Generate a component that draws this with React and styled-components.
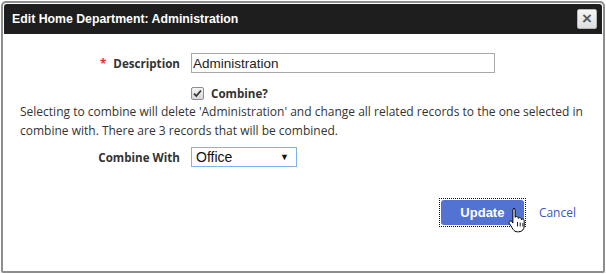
import React, { useState } from 'react';
import styled, { createGlobalStyle } from 'styled-components';

const GlobalStyle = createGlobalStyle`
  html, body {
    margin: 0;
    padding: 0;
    background: #fff;
  }
  body {
    font-family: "Open Sans", "Noto Sans", sans-serif;
  }
`;

// --- Styled Components ---
const Page = styled.div`
  width: 606px;
  height: 274px;
  padding: 1px;
  box-sizing: border-box;
`;
const Dialog = styled.div`
  height: 272px;
  box-sizing: border-box;
  border: 2px solid #8d8d8d;
  border-radius: 5px 5px 2px 2px;
  padding: 1px;
  background: #fff;
  display: flex;
  flex-direction: column;
`;
const TitleBar = styled.div`
  height: 30px;
  background: #1e1e1e;
  border-radius: 3px 3px 0 0;
  display: flex;
  align-items: center;
  justify-content: space-between;
  padding: 0 5px 0 8px;
`;
const Title = styled.h1`
  margin: 0;
  font-family: "Liberation Sans", Arial, sans-serif;
  font-size: 12.3px;
  font-weight: 700;
  color: #fff;
`;
const CloseButton = styled.button`
  width: 20px;
  height: 20px;
  padding: 0;
  border: 1px solid #b5b5b5;
  border-radius: 2px;
  background: linear-gradient(#f6f6f6, #dedede);
  color: #5a5a5a;
  font-family: "Liberation Sans", Arial, sans-serif;
  font-size: 17px;
  font-weight: 700;
  line-height: 16px;
  display: flex;
  align-items: center;
  justify-content: center;
`;
const Body = styled.div`
  flex: 1;
  padding: 19px 0 0 0;
  display: flex;
  flex-direction: column;
  color: #333;
`;
const FormRow = styled.div`
  display: grid;
  grid-template-columns: 176px 1fr;
  column-gap: 11px;
  align-items: center;
  margin-bottom: ${p => p.gap || 0}px;
`;
const Label = styled.label`
  text-align: right;
  font-size: 11.6px;
  font-weight: 700;
  color: #333;
`;
const Required = styled.span`
  color: #d9342b;
  margin-right: 7px;
`;
const TextInput = styled.input`
  width: 304px;
  height: 20px;
  box-sizing: border-box;
  border: 1px solid #a9a9a9;
  padding: 0 1px;
  font-family: "Liberation Sans", Arial, sans-serif;
  font-size: 13.5px;
  color: #222;
  outline: none;
`;
const CheckWrap = styled.label`
  display: flex;
  align-items: center;
  gap: 7px;
  font-size: 11.6px;
  font-weight: 700;
`;
const CheckBox = styled.span`
  width: 11px;
  height: 11px;
  border: 1px solid #8f8f8f;
  border-radius: 2px;
  background: linear-gradient(#f4f4f4, #d8d8d8);
  display: flex;
  align-items: center;
  justify-content: center;
`;
const Note = styled.p`
  margin: 1px 0 7px 0;
  padding: 0 10px 0 16px;
  font-size: 12px;
  line-height: 19px;
  color: #333;
`;
const Select = styled.div`
  width: 106px;
  height: 20px;
  box-sizing: border-box;
  border: 1px solid #7eb4ea;
  display: flex;
  align-items: center;
  justify-content: space-between;
  padding: 0 7px 0 4px;
  font-family: "Liberation Sans", Arial, sans-serif;
  font-size: 14px;
  color: #111;
  background: #fff;
`;
const Arrow = styled.span`
  font-size: 9px;
  color: #111;
`;
const Actions = styled.div`
  display: flex;
  justify-content: flex-end;
  align-items: center;
  gap: 13px;
  padding: 31px 26px 0 0;
`;
const ButtonFocus = styled.div`
  position: relative;
  border: 1px dotted #111;
  padding: 1px;
  display: flex;
`;
const PrimaryButton = styled.button`
  width: 83px;
  height: 25px;
  border: none;
  border-radius: 3px;
  background: #5373d3;
  color: #fff;
  font-family: "Liberation Sans", Arial, sans-serif;
  font-size: 13px;
  font-weight: 700;
  padding: 0;
`;
const Cursor = styled.svg`
  position: absolute;
  left: 68px;
  top: 8px;
  pointer-events: none;
`;
const CancelLink = styled.a`
  font-size: 12px;
  color: #3b55c4;
  text-decoration: none;
  cursor: pointer;
`;

const HandCursor = () => (
  <Cursor width="20" height="26" viewBox="0 0 20 26">
    <path
      d="M5.5 1.5c1 0 1.6.7 1.6 1.6v7.2c.3-.5.9-.8 1.5-.8 1 0 1.6.7 1.6 1.6v.3c.3-.5.9-.8 1.5-.8 1 0 1.6.7 1.6 1.6v.5c.3-.4.8-.6 1.3-.6 1 0 1.6.7 1.6 1.6v5.3c0 3.4-2.2 5.8-5.6 5.8H9.4c-2 0-3.2-.9-4.3-2.4L1.4 16.6c-.6-.9-.4-1.8.3-2.3.8-.5 1.7-.3 2.3.5l.9 1.3V3.1c0-.9.6-1.6 1.6-1.6z"
      fill="#fff"
      stroke="#000"
      strokeWidth="1"
      strokeLinejoin="round"
    />
    <path d="M9.5 15v4.5M12.2 15.5v4M14.9 16v3.5" stroke="#000" strokeWidth="0.9" />
  </Cursor>
);

const App = () => {
  const [description, setDescription] = useState('Administration');

  return (
    <Page>
      <GlobalStyle />
      <Dialog>
        <TitleBar>
          <Title>Edit Home Department: Administration</Title>
          <CloseButton aria-label="close">×</CloseButton>
        </TitleBar>
        <Body>
          <FormRow gap={13}>
            <Label>
              <Required>*</Required>Description
            </Label>
            <TextInput value={description} onChange={e => setDescription(e.target.value)} />
          </FormRow>

          <FormRow>
            <span />
            <CheckWrap>
              <CheckBox>
                <svg width="9" height="9" viewBox="0 0 9 9">
                  <path d="M1 4.6l2.3 2.4L8 1.5" fill="none" stroke="#333" strokeWidth="1.8" />
                </svg>
              </CheckBox>
              Combine?
            </CheckWrap>
          </FormRow>

          <Note>
            Selecting to combine will delete 'Administration' and change all related records to the one selected in
            combine with. There are 3 records that will be combined.
          </Note>

          <FormRow>
            <Label>Combine With</Label>
            <Select>
              Office
              <Arrow>▼</Arrow>
            </Select>
          </FormRow>

          <Actions>
            <ButtonFocus>
              <PrimaryButton>Update</PrimaryButton>
              <HandCursor />
            </ButtonFocus>
            <CancelLink>Cancel</CancelLink>
          </Actions>
        </Body>
      </Dialog>
    </Page>
  );
};

export default App;
